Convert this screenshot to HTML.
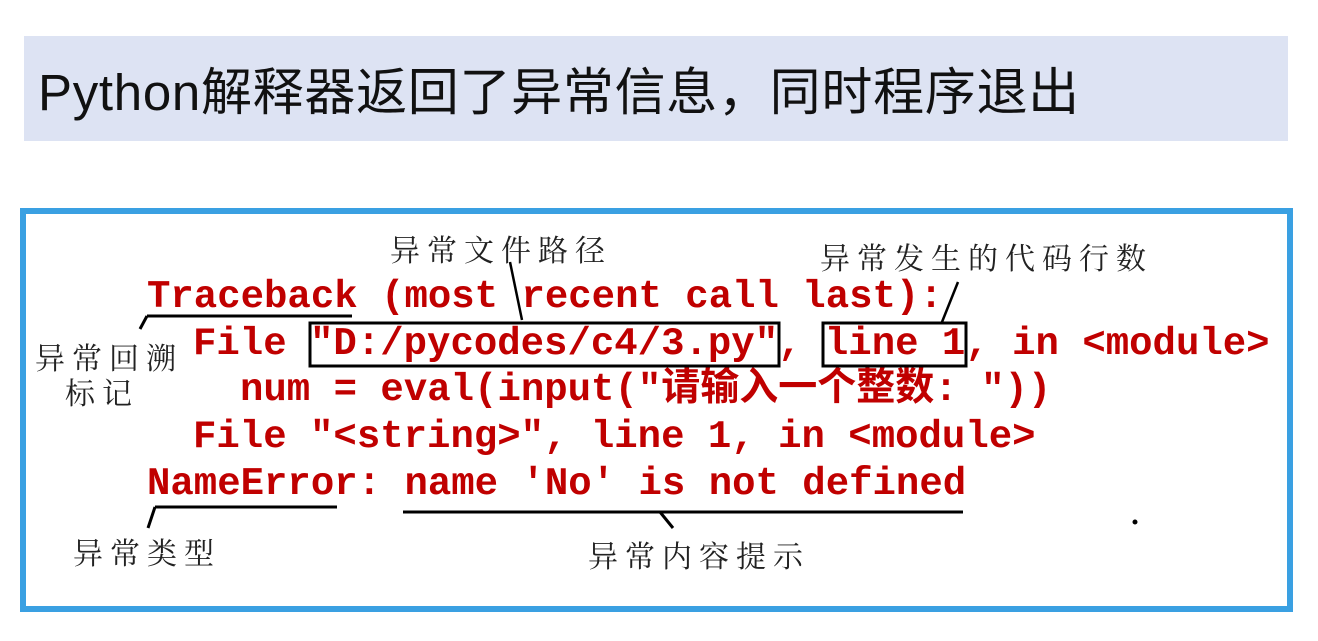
<!DOCTYPE html>
<html><head><meta charset="utf-8"><style>
body{margin:0;width:1318px;height:641px;background:#fff;position:relative;overflow:hidden;font-family:"Liberation Sans","Noto Sans CJK SC",sans-serif}
.band{position:absolute;left:24px;top:36px;width:1264px;height:105px;background:#dde3f3}
.title{position:absolute;left:38px;top:63px;font-size:51px;letter-spacing:0.7px;line-height:60px;color:#111;white-space:nowrap}
.box{position:absolute;left:20px;top:208px;width:1261px;height:392px;border:6px solid #3aa0e2}
.c{position:absolute;font-family:"Liberation Mono","Noto Sans CJK SC",monospace;font-weight:bold;font-size:39px;line-height:1;color:#c00000;white-space:pre}
.a{position:absolute;font-family:"Noto Serif CJK SC",serif;font-size:30px;line-height:1;letter-spacing:7px;color:#222;white-space:nowrap}
</style></head><body>
<div class="band"></div>
<div class="title">Python解释器返回了异常信息，同时程序退出</div>
<div class="box"></div>
<div class="c" style="left:147px;top:278px">Traceback (most recent call last):</div>
<div class="c" style="left:193px;top:325px">File "D:/pycodes/c4/3.py", line 1, in &lt;module&gt;</div>
<div class="c" style="left:240px;top:371px">num = eval(input("请输入一个整数: "))</div>
<div class="c" style="left:193px;top:418px">File "&lt;string&gt;", line 1, in &lt;module&gt;</div>
<div class="c" style="left:147px;top:465px">NameError: name 'No' is not defined</div>
<div class="a" style="left:390px;top:233px">异常文件路径</div>
<div class="a" style="left:820px;top:241px">异常发生的代码行数</div>
<div class="a" style="left:35px;top:341px">异常回溯</div>
<div class="a" style="left:65px;top:376px">标记</div>
<div class="a" style="left:73px;top:536px">异常类型</div>
<div class="a" style="left:588px;top:539px">异常内容提示</div>
<svg width="1318" height="641" style="position:absolute;left:0;top:0" fill="none" stroke="#000">
<rect x="310" y="323" width="469" height="43" stroke-width="3"/>
<rect x="823" y="323" width="143" height="43" stroke-width="3"/>
<path d="M147 316H352M147 316L140 329" stroke-width="3"/>
<path d="M510 262L522 320" stroke-width="2.5"/>
<path d="M958 282L942 322" stroke-width="2.5"/>
<path d="M155 507H337M155 507L148 528" stroke-width="3"/>
<path d="M403 512H963M660 512L673 528" stroke-width="3"/>
<circle cx="1135" cy="522" r="2" fill="#000"/>
</svg>
</body></html>
